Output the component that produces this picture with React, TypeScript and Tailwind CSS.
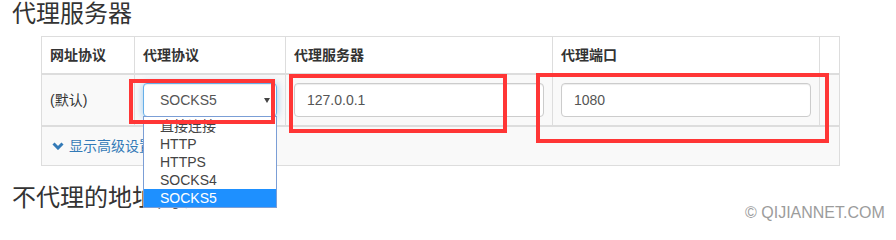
const OPTIONS = ["直接连接", "HTTP", "HTTPS", "SOCKS4", "SOCKS5"];

function TextInput({ value }: { value: string }) {
  return (
    <input
      readOnly
      value={value}
      className="block w-full h-[34px] px-[12px] border border-[#ccc] rounded-[4px] bg-white text-[14px] text-[#555] shadow-[inset_0_1px_1px_rgba(0,0,0,0.075)] outline-none"
    />
  );
}

export default function App() {
  return (
    <div className="relative w-[896px] h-[225px] overflow-hidden bg-white text-[#333] font-['Liberation_Sans','Noto_Sans_CJK_SC',sans-serif]">
      <h3 className="h-[36px] pl-[12px] text-[24px] leading-[28px] font-normal">代理服务器</h3>

      <div className="ml-[41px] w-[799px] border border-[#ddd] text-[14px]">
        {/* 表头 */}
        <div className="grid grid-cols-[92px_151px_267px_267px_20px] h-[38px] border-b-2 border-[#ddd] font-bold bg-white">
          <div className="flex items-center px-2">网址协议</div>
          <div className="flex items-center px-2 border-l border-[#ddd]">代理协议</div>
          <div className="flex items-center px-2 border-l border-[#ddd]">代理服务器</div>
          <div className="flex items-center px-2 border-l border-[#ddd]">代理端口</div>
          <div className="border-l border-[#ddd]" />
        </div>

        {/* 默认行 */}
        <div className="grid grid-cols-[92px_151px_267px_267px_20px] h-[52px] border-b-2 border-[#ddd] bg-[#f9f9f9]">
          <div className="flex items-center px-2">(默认)</div>
          <div className="px-2 py-2 border-l border-[#ddd]">
            <div className="relative h-[34px]">
              <div className="flex items-center justify-between h-[34px] pl-[16px] pr-[6px] border border-[#66afe9] rounded-[4px] bg-white text-[#555] shadow-[inset_0_1px_1px_rgba(0,0,0,0.075),0_0_8px_rgba(102,175,233,0.6)]">
                <span>SOCKS5</span>
                <span className="w-0 h-0 border-l-[3px] border-r-[3px] border-t-[5px] border-l-transparent border-r-transparent border-t-[#444]" />
              </div>
              <ul className="absolute left-0 top-[33px] z-10 w-full border border-[#7b9ed6] bg-white">
                {OPTIONS.map((o) => (
                  <li
                    key={o}
                    className={`h-[18px] leading-[18px] pl-[16px] ${
                      o === "SOCKS5" ? "bg-[#1e90ff] text-white" : "text-[#444]"
                    }`}
                  >
                    {o}
                  </li>
                ))}
              </ul>
            </div>
          </div>
          <div className="px-2 py-2 border-l border-[#ddd]">
            <TextInput value="127.0.0.1" />
          </div>
          <div className="px-2 py-2 border-l border-[#ddd]">
            <TextInput value="1080" />
          </div>
          <div className="border-l border-[#ddd]" />
        </div>

        {/* 高级设置 */}
        <div className="flex items-center gap-[5px] h-[38px] px-[10px] bg-[#f9f9f9] text-[#337ab7]">
          <svg width="12" height="8" viewBox="0 0 12 8">
            <path d="M1.5 1.5 L6 6 L10.5 1.5" fill="none" stroke="#337ab7" strokeWidth="3" />
          </svg>
          <span>显示高级设置</span>
        </div>
      </div>

      <h3 className="mt-[18px] pl-[12px] text-[24px] leading-[28px] font-normal">不代理的地址列表</h3>

      {/* 标注框 */}
      <div className="absolute left-[129px] top-[79px] z-20 w-[146px] h-[45px] border-4 border-[#ff3636]" />
      <div className="absolute left-[289px] top-[74px] z-20 w-[218px] h-[59px] border-4 border-[#ff3636]" />
      <div className="absolute left-[536px] top-[73px] z-20 w-[293px] h-[70px] border-4 border-[#ff3636]" />

      <div className="absolute left-[745px] top-[204px] text-[16px] leading-[18px] text-[#9c9c9c]">© QIJIANNET.COM</div>
    </div>
  );
}
